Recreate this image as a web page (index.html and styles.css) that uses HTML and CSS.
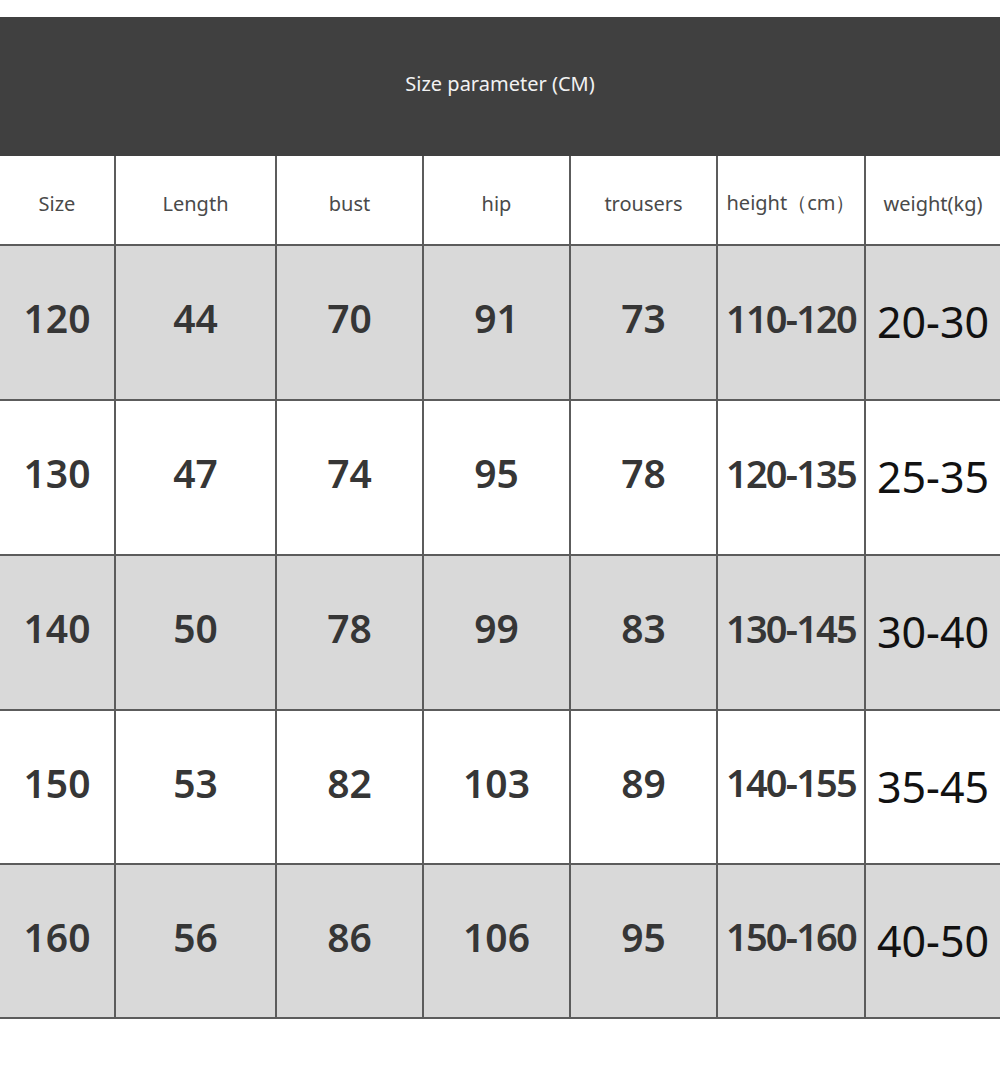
FILE: index.html
```html
<!DOCTYPE html>
<html lang="en">
<head>
<meta charset="utf-8">
<title>Size parameter</title>
<link rel="stylesheet" href="styles.css">
</head>
<body>
<div class="page">
  <div class="title-bar">Size parameter (CM)</div>
  <div class="table">
    <div class="cell head">Size</div>
    <div class="cell head">Length</div>
    <div class="cell head">bust</div>
    <div class="cell head">hip</div>
    <div class="cell head">trousers</div>
    <div class="cell head">height（cm）</div>
    <div class="cell head">weight(kg)</div>

    <div class="cell num shade">120</div>
    <div class="cell num shade">44</div>
    <div class="cell num shade">70</div>
    <div class="cell num shade">91</div>
    <div class="cell num shade">73</div>
    <div class="cell num tight shade">110-120</div>
    <div class="cell wt shade">20-30</div>

    <div class="cell num">130</div>
    <div class="cell num">47</div>
    <div class="cell num">74</div>
    <div class="cell num">95</div>
    <div class="cell num">78</div>
    <div class="cell num tight">120-135</div>
    <div class="cell wt">25-35</div>

    <div class="cell num shade">140</div>
    <div class="cell num shade">50</div>
    <div class="cell num shade">78</div>
    <div class="cell num shade">99</div>
    <div class="cell num shade">83</div>
    <div class="cell num tight shade">130-145</div>
    <div class="cell wt shade">30-40</div>

    <div class="cell num">150</div>
    <div class="cell num">53</div>
    <div class="cell num">82</div>
    <div class="cell num">103</div>
    <div class="cell num">89</div>
    <div class="cell num tight">140-155</div>
    <div class="cell wt">35-45</div>

    <div class="cell num shade">160</div>
    <div class="cell num shade">56</div>
    <div class="cell num shade">86</div>
    <div class="cell num shade">106</div>
    <div class="cell num shade">95</div>
    <div class="cell num tight shade">150-160</div>
    <div class="cell wt shade">40-50</div>
  </div>
</div>
</body>
</html>
```

FILE: styles.css
```css
html, body {
  margin: 0;
  padding: 0;
  background: #ffffff;
}

.page {
  width: 1000px;
  padding-top: 17px;
  font-family: "Noto Sans", "Open Sans", sans-serif;
}

.title-bar {
  height: 139px;
  background: #404040;
  color: #f2f2f2;
  font-size: 20px;
  display: flex;
  align-items: center;
  justify-content: center;
  padding-bottom: 6px;
  box-sizing: border-box;
}

.table {
  display: grid;
  grid-template-columns: 114px 159px 145px 145px 145px 146px 134px;
  grid-template-rows: 88px 153px 153px 153px 152px 152px;
  gap: 2px;
  background: #5c5c5c;
  border-bottom: 2px solid #5c5c5c;
}

.cell {
  background: #ffffff;
  display: flex;
  align-items: center;
  justify-content: center;
  white-space: nowrap;
}

.cell.shade {
  background: #d9d9d9;
}

.head {
  font-size: 20px;
  color: #4a4a4a;
  padding-top: 6px;
}

.num {
  font-size: 39px;
  font-weight: 600;
  color: #363636;
  padding-bottom: 10px;
}

.num.tight {
  letter-spacing: -1.8px;
  font-size: 38px;
}

.wt {
  font-size: 43px;
  font-weight: 400;
  color: #111111;
  padding-bottom: 2px;
}
```
